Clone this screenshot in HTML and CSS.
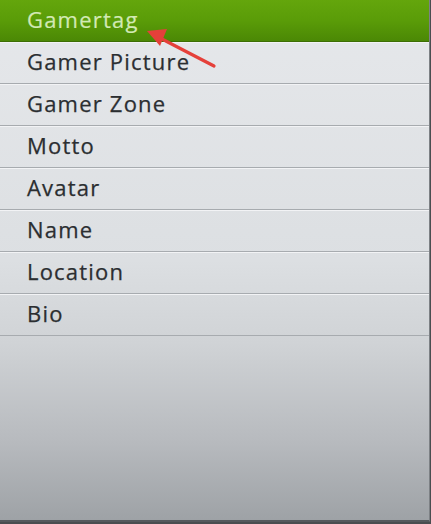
FILE: index.html
```html
<!DOCTYPE html>
<html>
<head>
<meta charset="utf-8">
<link rel="stylesheet" href="styles.css">
</head>
<body>
<div class="panel">
  <ul class="menu">
    <li class="item selected">Gamertag</li>
    <li class="item">Gamer Picture</li>
    <li class="item">Gamer Zone</li>
    <li class="item">Motto</li>
    <li class="item">Avatar</li>
    <li class="item">Name</li>
    <li class="item">Location</li>
    <li class="item">Bio</li>
  </ul>
  <svg class="arrow" width="431" height="80" viewBox="0 0 431 80">
    <line x1="160" y1="38" x2="214" y2="66" stroke="#e5403a" stroke-width="3.2" stroke-linecap="round"/>
    <polygon points="147,31 167,29 160,46" fill="#e5403a"/>
  </svg>
</div>
</body>
</html>
```
FILE: styles.css
```css
html, body {
  margin: 0;
  padding: 0;
}
body {
  width: 431px;
  height: 524px;
  overflow: hidden;
  background: #4a4d50;
}
.panel {
  position: relative;
  width: 430px;
  height: 522px;
  border-right: 1px solid #7d8185;
  border-bottom: 2px solid #55595d;
  box-sizing: border-box;
  background: linear-gradient(to bottom, #e6e8eb 0%, #dcdfe2 50%, #d0d3d6 66%, #b7babe 85%, #9ea2a6 100%);
}
.menu {
  list-style: none;
  margin: 0;
  padding: 0;
}
.item {
  height: 41px;
  border-bottom: 1px solid #a7abaf;
  box-shadow: inset 0 1px 0 #f2f3f5;
  padding-left: 27px;
  font-family: "Open Sans", sans-serif;
  font-size: 22px;
  letter-spacing: 1.2px;
  line-height: 39px;
  color: #2b2e31;
  -webkit-text-stroke: 0.25px #2b2e31;
}
.item.selected {
  background: linear-gradient(to bottom, #64a60c 0%, #5a9c08 50%, #4b8805 100%);
  color: #d2e9b4;
  -webkit-text-stroke: 0.2px #d2e9b4;
  border-bottom: 1px solid #3d6e04;
  box-shadow: 0 1px 0 #e8eae0;
}
.arrow {
  position: absolute;
  left: 0;
  top: 0;
}
```
